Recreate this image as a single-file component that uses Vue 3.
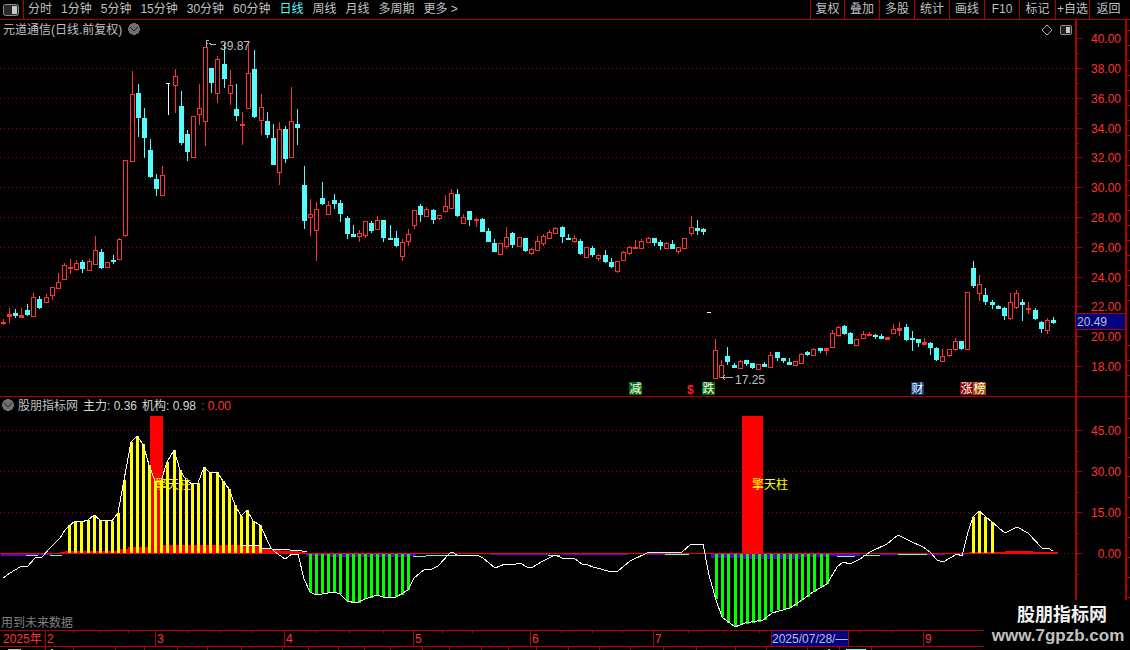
<script setup>
const leftMenu = [
  { t: '分时' }, { t: '1分钟' }, { t: '5分钟' }, { t: '15分钟' }, { t: '30分钟' }, { t: '60分钟' },
  { t: '日线', on: true }, { t: '周线' }, { t: '月线' }, { t: '多周期' }, { t: '更多 >' }
]
const rightMenu = ['复权', '叠加', '多股', '统计', '画线', 'F10', '标记', '+自选', '返回']

const raw = [
[3,'r',319,322,323,325],[9,'r',308,314,316,323],[15,'c',309,313,315,318],[21,'r',308,315,317,317],[27,'c',304,310,315,316],
[33,'r',293,297,316,317],[39,'c',296,299,308,309],[46,'r',294,297,302,303],[52,'r',287,287,295,300],[58,'r',273,282,288,288],
[64,'r',263,265,279,280],[70,'r',259,267,268,274],[76,'r',260,263,269,271],[82,'c',260,262,269,273],[89,'r',259,261,270,270],
[95,'r',236,250,264,264],[101,'c',249,252,268,269],[107,'r',262,262,267,267],[113,'c',255,260,261,264],[119,'r',238,239,259,259],
[125,'r',160,160,235,237],[132,'r',71,94,161,161],[138,'c',84,93,118,137],[144,'c',108,118,138,158],[150,'c',139,150,177,178],
[156,'c',174,179,189,196],[162,'r',166,175,195,195],[175,'r',69,76,85,113],[181,'c',91,106,143,145],[187,'c',130,134,152,161],
[193,'r',116,116,157,157],[199,'r',84,108,114,125],[205,'r',47,47,121,146],[211,'c',68,68,83,93],[217,'r',56,59,93,103],
[224,'c',43,64,79,88],[230,'r',70,85,93,105],[236,'c',84,109,116,121],[242,'r',112,124,125,145],[248,'r',41,73,108,109],
[254,'c',50,69,117,118],[261,'r',94,107,120,135],[267,'c',112,121,135,138],[273,'c',124,138,165,165],[279,'r',122,129,172,185],
[285,'c',126,129,159,163],[291,'r',87,121,157,157],[297,'c',109,124,128,145],[304,'c',166,185,221,229],[310,'r',199,214,217,236],
[316,'r',202,209,230,261],[322,'c',182,198,204,205],[328,'r',201,205,214,215],[334,'c',194,200,204,209],[340,'c',200,203,214,222],
[347,'c',216,218,234,239],[353,'c',225,234,236,236],[359,'r',230,233,236,242],[365,'r',221,221,235,238],[371,'c',221,223,231,233],
[377,'r',216,220,229,229],[383,'c',220,220,238,242],[390,'c',225,238,239,240],[396,'c',231,238,246,247],[402,'r',239,242,256,261],
[408,'r',229,234,241,246],[414,'r',210,210,225,229],[420,'c',204,206,215,222],[426,'r',207,209,216,216],[433,'c',209,210,220,224],
[439,'r',215,215,218,220],[445,'r',195,206,211,213],[451,'r',189,193,208,208],[457,'c',189,194,216,217],[463,'r',214,217,223,223],
[469,'c',211,211,220,226],[476,'r',218,219,220,227],[482,'c',218,219,232,232],[488,'c',228,231,242,242],[494,'c',239,243,252,252],
[500,'r',243,243,254,254],[506,'r',227,237,246,249],[512,'c',232,233,245,248],[519,'r',237,237,246,247],[525,'c',238,238,251,252],
[531,'r',248,249,253,255],[537,'r',236,241,250,250],[543,'r',234,236,243,246],[549,'r',230,232,238,238],[555,'r',227,228,233,233],
[562,'c',226,227,237,243],[568,'c',234,238,239,239],[574,'r',235,238,241,243],[580,'c',239,241,254,255],[586,'r',247,247,257,257],
[592,'c',246,248,255,257],[598,'r',254,255,258,261],[605,'c',250,255,262,263],[611,'c',258,262,267,268],[617,'r',261,261,271,273],
[623,'r',251,252,260,260],[629,'r',246,247,253,255],[635,'r',240,247,248,249],[641,'r',239,241,248,248],[648,'r',237,238,242,242],
[654,'c',238,238,243,246],[660,'c',240,242,246,250],[666,'r',242,243,248,248],[672,'c',240,244,249,249],[678,'r',247,247,251,254],
[684,'r',238,238,248,248],[691,'r',216,227,233,236],[697,'c',220,228,230,235],[703,'c',228,229,232,235],
[715,'r',339,350,378,378],[721,'r',360,365,377,377],[727,'c',347,356,362,365],[734,'c',363,365,367,367],[740,'r',360,361,368,368],
[746,'c',360,360,364,366],[752,'c',363,363,368,369],[758,'r',364,364,369,369],[764,'c',362,364,366,367],[770,'r',352,355,367,368],
[777,'c',352,352,358,361],[783,'c',358,358,361,363],[789,'c',358,362,364,365],[795,'r',361,361,365,365],[801,'r',353,354,363,364],
[807,'c',351,352,354,356],[813,'r',348,349,355,356],[820,'c',348,348,351,353],[826,'r',348,348,350,355],[832,'r',330,333,347,348],
[838,'r',326,327,335,337],[844,'c',325,326,334,335],[850,'c',332,333,344,344],[856,'r',339,339,345,345],[863,'r',331,334,338,338],
[869,'r',332,334,335,336],[875,'c',334,335,336,339],[881,'c',334,336,338,338],[887,'r',337,337,339,339],[893,'r',324,329,333,333],
[899,'r',322,328,330,336],[906,'c',324,327,340,341],[912,'c',331,338,339,351],[918,'c',339,339,343,347],[924,'r',338,342,344,344],
[930,'c',342,343,348,355],[936,'c',347,348,360,361],[942,'r',349,356,361,361],[949,'r',349,349,355,357],[955,'r',338,341,349,351],
[961,'c',341,341,349,350],[967,'r',292,292,349,349],[973,'c',261,268,286,288],[979,'r',275,284,293,301],[985,'c',288,295,302,305],
[992,'c',300,302,305,309],[998,'c',305,306,309,309],[1004,'c',307,308,316,320],[1010,'r',293,302,318,320],[1016,'r',290,293,307,309],
[1022,'c',299,302,305,321],[1028,'r',302,308,309,314],[1035,'c',308,310,319,320],[1041,'c',321,322,329,333],[1047,'r',318,320,330,334],
[1053,'c',317,320,323,324]
]
const candles = raw.map(([x, k, wt, t, b, wb], i) => ({
  id: i, x, wt, wb, t, b, red: k === 'r', flat: b - t <= 2, h: Math.max(b - t, 1)
}))

const priceLabels = [
  ['40.00', 38], ['38.00', 68], ['36.00', 98], ['34.00', 128], ['32.00', 157], ['30.00', 187],
  ['28.00', 217], ['26.00', 247], ['24.00', 277], ['22.00', 306], ['20.00', 336], ['18.00', 366]
]
const priceGrid = priceLabels.slice(1).map((p) => p[1])
const priceMinor = priceLabels.map((p) => p[1] + 15)
const outerTicks = [30, 45, 60, 75, 90, 105, 120, 135, 150, 165, 180, 195, 210, 225, 240, 255, 270, 285, 300, 345, 360, 375]

const tags = [
  { t: '减', x: 629, c: 'tg' }, { t: '跌', x: 702, c: 'tg' }, { t: '财', x: 911, c: 'tb' },
  { t: '涨', x: 960, c: 'tr' }, { t: '榜', x: 973, c: 'to' }
]

const subLabels = [['45.00', 430], ['30.00', 471], ['15.00', 512], ['0.00', 553]]
const subMinor = [451, 492, 533, 574]
const subOuter = [418, 437, 457, 476, 497, 517, 537, 557, 577, 597]

const yellow = [
  [69,525],[75,521],[81,522],[88,520],[94,515],[100,520],[106,521],[112,521],[118,513],[124,480],[131,442],[137,436],
  [143,444],[149,465],[155,481],[161,481],[167,462],[174,450],[180,470],[186,480],[192,484],[198,483],[204,467],[210,473],
  [217,472],[223,481],[229,489],[235,505],[241,516],[247,510],[253,521],[260,525],
  [973,517],[979,511],[985,517],[992,522]
].map(([x, y]) => ({ x, y, h: 553 - y }))

const green = [
  [310,592],[316,595],[322,593],[328,593],[334,592],[340,594],[347,601],[353,603],[359,603],[365,599],[371,598],[377,595],
  [383,597],[389,597],[396,597],[402,595],[408,590],
  [716,599],[722,617],[728,623],[735,626],[741,625],[747,624],[753,623],[759,622],[765,620],[771,612],[778,610],[784,609],
  [790,608],[796,606],[802,600],[808,597],[814,592],[821,587],[827,584]
].map(([x, y]) => ({ x, h: y - 553 }))

const purple = [
  [1,553,25,3],[26,553,26,2],[306,554,24,2],[330,554,80,3],[410,554,6,2],[490,554,60,1],[563,554,65,1],[647,554,18,1],
  [711,554,29,4],[740,554,60,5],[800,554,30,3],[830,554,30,2],[880,554,18,1],[925,554,20,1],[955,554,10,1]
].map(([x, y, w, h]) => ({ x, y, w, h }))
const mint = [
  [26,555,12],[50,555,12],[413,556,13],[426,555,18],[443,555,24],[548,555,12],[665,554,24],[680,554,9],
  [837,556,18],[863,555,17],[898,554,29]
].map(([x, y, w]) => ({ x, y, w }))

const linePts = [
  [3,578],[10,573],[20,567],[28,566],[35,558],[42,557],[50,548],[60,538],[65,530],[69,526],[75,521],[81,522],[88,520],[94,515],
  [100,520],[112,521],[118,513],[124,480],[131,442],[137,436],[143,444],[149,465],[155,481],[161,481],[167,462],[174,450],
  [180,470],[186,480],[192,484],[198,483],[204,467],[210,473],[217,472],[223,481],[229,489],[235,505],[241,516],[247,510],
  [253,521],[260,525],[271,548],[275,552],[285,559],[292,554],[298,554],[304,579],[310,592],[316,595],[328,593],[334,592],
  [340,594],[347,601],[356,603],[365,599],[377,595],[383,597],[396,597],[408,590],[414,578],[425,569],[432,569],[438,566],
  [450,553],[452,552],[457,555],[467,556],[477,555],[483,558],[495,568],[505,564],[512,565],[520,563],[527,567],[533,567],
  [543,561],[555,555],[562,558],[575,559],[582,564],[588,565],[593,567],[612,572],[618,571],[630,561],[647,553],[657,552],
  [682,552],[690,545],[703,544],[709,575],[716,600],[722,617],[735,627],[745,623],[763,620],[772,613],[790,608],[802,600],
  [813,592],[827,584],[837,567],[843,562],[850,564],[860,559],[870,552],[887,544],[898,535],[910,541],[923,547],[930,552],
  [937,560],[943,562],[950,558],[957,554],[962,556],[968,532],[973,517],[979,511],[992,522],[1005,533],[1017,527],[1028,533],
  [1042,548],[1048,548],[1053,551]
].map((p) => p.join(',')).join(' ')

const dateLabels = [['2025年', 3], ['2', 47], ['3', 157], ['4', 286], ['5', 415], ['6', 532], ['7', 655], ['9', 925]]
const dateDiv = [45, 155, 284, 413, 530, 653, 923]
const dateTicks = [73, 100, 128, 187, 220, 252, 316, 349, 383, 442, 472, 561, 592, 622, 688, 724, 759, 859, 891]
const lowTicks = [45, 73, 115, 144, 177, 207, 241, 282, 308, 338, 364, 390, 422, 449, 481, 508, 536, 568, 599, 630, 663, 696, 735, 766, 807, 839, 871]
</script>

<template>
  <div class="page">
    <header class="topbar">
      <div class="corner">
        <svg width="16" height="12" viewBox="0 0 16 12">
          <rect x="0.5" y="0.5" width="15" height="11" rx="2" fill="#2a2a2a" stroke="#8c8c8c" />
          <rect x="9" y="2" width="5" height="8" fill="#c8c8c8" />
        </svg>
      </div>
      <nav class="menu">
        <span v-for="m in leftMenu" :key="m.t" class="mi" :class="{ on: m.on }">{{ m.t }}</span>
      </nav>
      <nav class="tools">
        <span v-for="m in rightMenu" :key="m" class="tool">{{ m }}</span>
      </nav>
    </header>

    <svg class="panel main" width="1130" height="376" viewBox="0 20 1130 376">
      <defs>
        <pattern id="dotsA" width="4" height="1" patternUnits="userSpaceOnUse">
          <rect width="1" height="1" fill="#9a0000" />
        </pattern>
      </defs>
      <rect v-for="y in priceGrid" :key="y" x="0" :y="y" width="1075" height="1" fill="url(#dotsA)" />
      <g v-for="c in candles" :key="c.id">
        <rect :x="c.x" :y="c.wt" width="1" :height="c.wb - c.wt" :fill="c.red ? '#ff3232' : '#54fcfc'" />
        <template v-if="c.flat">
          <rect :x="c.x - 2" :y="c.t" width="5" :height="c.h + 1" :fill="c.red ? '#ff3232' : '#54fcfc'" />
        </template>
        <rect v-else-if="c.red" :x="c.x - 1.5" :y="c.t + 0.5" width="4" :height="c.h" fill="#000" stroke="#ff3232" />
        <rect v-else :x="c.x - 2" :y="c.t" width="5" :height="c.h" fill="#54fcfc" />
      </g>
      <rect x="168" y="83" width="1" height="32" fill="#fff" />
      <rect x="166" y="83" width="4" height="1" fill="#fff" />
      <rect x="707" y="312" width="4" height="1" fill="#fff" />

      <path class="mark" d="M206 47V40H209M206 43H208M209 43L212 45L216 44" />
      <text class="txt" x="220" y="50">39.87</text>
      <path class="mark" d="M733 377.5H722L725 375.5M722 377.5L725 379.5" />
      <text class="txt" x="735" y="384">17.25</text>

      <text class="txt" x="3" y="34">元道通信(日线.前复权)</text>
      <circle cx="134" cy="29" r="6" fill="#6e6e6e" />
      <path class="chev" d="M130.5 27.5L134 31L137.5 27.5" />
      <path class="mark" d="M1047 25L1052 30L1047 35L1042 30Z" />
      <rect x="1060.5" y="25.5" width="11" height="9" rx="2" fill="#222" stroke="#8c8c8c" />
      <rect x="1066" y="27" width="4" height="6" fill="#c8c8c8" />

      <g v-for="t in tags" :key="t.t">
        <rect :class="t.c" :x="t.x" y="382" width="13" height="13" />
        <text class="tag" :x="t.x + 0.5" y="393">{{ t.t }}</text>
      </g>
      <text class="dollar" x="687" y="394">$</text>

      <rect class="axis" x="1075" y="20" width="2" height="376" />
      <rect class="axis" x="1125" y="20" width="2" height="376" />
      <rect v-for="p in priceLabels" :key="p[1]" class="axis" x="1077" :y="p[1]" width="5" height="1" />
      <rect v-for="y in priceMinor" :key="y" class="axis" x="1077" :y="y" width="2" height="1" />
      <rect v-for="y in outerTicks" :key="y" class="axis" x="1127" :y="y" width="3" height="1" />
      <text v-for="p in priceLabels" :key="p[0]" class="num" x="1121" :y="p[1] + 5">{{ p[0] }}</text>
      <rect x="1075.5" y="313.5" width="50" height="16" fill="#000080" stroke="#b00000" />
      <text class="txt" x="1077" y="326">20.49</text>
    </svg>

    <svg class="panel sub" width="1130" height="234" viewBox="0 396 1130 234">
      <defs>
        <pattern id="dotsB" width="4" height="1" patternUnits="userSpaceOnUse">
          <rect width="1" height="1" fill="#9a0000" />
        </pattern>
      </defs>
      <rect class="axis" x="0" y="396" width="1130" height="1" />
      <rect v-for="s in subLabels.slice(0, 3)" :key="s[1]" x="0" :y="s[1]" width="1075" height="1" fill="url(#dotsB)" />
      <rect x="1058" y="553" width="17" height="1" fill="url(#dotsB)" />
      <rect x="150" y="416" width="13" height="137" fill="#f00" />
      <rect x="742" y="416" width="21" height="137" fill="#f00" />
      <polygon fill="#f00" points="60,553 60,552 70,551 120,551 120,549 128,549 128,547 163,547 163,545 258,545 262,548 272,550 290,551 305,552 305,553" />
      <polygon fill="#f00" points="969,553 969,552 1005,552 1005,551 1033,551 1033,552 1058,552 1058,553" />
      <rect v-for="b in purple" :key="b.x" :x="b.x" :y="b.y" :width="b.w" :height="b.h" fill="#6000c8" />
      <rect v-for="m in mint" :key="m.x" :x="m.x" :y="m.y" :width="m.w" height="1" fill="#66ffcc" />
      <rect v-for="(b, i) in yellow" :key="i" :x="b.x - 1" :y="b.y" width="3" :height="b.h" fill="#ff0" />
      <rect v-for="(b, i) in green" :key="i" :x="b.x - 1" y="553" width="3" :height="b.h" fill="#0f0" />
      <rect x="0" y="553" width="1058" height="1" fill="#f00" />
      <polyline class="wave" :points="linePts" />
      <polyline class="wave" points="240,545 258,545 262,548 272,549 290,550 302,551 307,552" />
      <text class="yl" x="155" y="489">擎天柱</text>
      <text class="yl" x="752" y="489">擎天柱</text>

      <circle cx="8" cy="405" r="6" fill="#6e6e6e" />
      <path class="chev" d="M4.5 403.5L8 407L11.5 403.5" />
      <text class="txt" x="18" y="410">股朋指标网</text>
      <text class="txt lt" x="83" y="410">主力: 0.36</text>
      <text class="txt lt" x="142" y="410">机构: 0.98</text>
      <text class="red" x="201" y="410">: 0.00</text>
      <text class="future" x="1" y="627">用到未来数据</text>

      <rect class="axis" x="1075" y="396" width="2" height="234" />
      <rect class="axis" x="1125" y="396" width="2" height="234" />
      <rect v-for="s in subLabels" :key="s[1]" class="axis" x="1077" :y="s[1]" width="5" height="1" />
      <rect v-for="y in subMinor" :key="y" class="axis" x="1077" :y="y" width="2" height="1" />
      <rect v-for="y in subOuter" :key="y" class="axis" x="1127" :y="y" width="3" height="1" />
      <text v-for="s in subLabels" :key="s[0]" class="num" x="1121" :y="s[1] + 5">{{ s[0] }}</text>
    </svg>

    <svg class="panel date" width="1130" height="20" viewBox="0 630 1130 20">
      <rect class="axis" x="0" y="630" width="1130" height="1" />
      <rect class="axis" x="0" y="646" width="1130" height="1" />
      <rect v-for="x in dateDiv" :key="x" class="axis" :x="x" y="630" width="1" height="16" />
      <rect v-for="x in dateTicks" :key="x" class="axis" :x="x" y="631" width="1" height="2" />
      <rect v-for="x in lowTicks" :key="x" class="axis" :x="x" y="647" width="1" height="3" />
      <rect x="771.5" y="630.5" width="77" height="16" fill="#000080" stroke="#b00000" />
      <text v-for="d in dateLabels" :key="d[0]" class="red" :x="d[1]" y="643">{{ d[0] }}</text>
      <text class="txt" x="772" y="643">2025/07/28/—</text>
      <rect x="8" y="649" width="13" height="1" fill="#c0c0c0" />
      <rect x="51" y="649" width="2" height="1" fill="#c0c0c0" />
      <rect x="828" y="649" width="2" height="1" fill="#c0c0c0" />
      <rect x="846" y="649" width="20" height="1" fill="#54fcfc" />
    </svg>

    <aside class="stamp">
      <strong class="s1">股朋指标网</strong>
      <span class="s2">www.7gpzb.com</span>
    </aside>
  </div>
</template>

<style scoped>
.page {
  position: relative;
  width: 1130px;
  height: 650px;
  overflow: hidden;
  background: #000;
  display: flex;
  flex-direction: column;
  font-family: "Liberation Sans", "Noto Sans CJK SC", sans-serif;
  font-size: 12px;
  color: #c0c0c0;
}
.topbar {
  flex: 0 0 20px;
  box-sizing: border-box;
  display: flex;
  align-items: stretch;
  border-bottom: 1px solid #b00000;
  line-height: 19px;
}
.corner {
  flex: 0 0 24px;
  box-sizing: border-box;
  display: flex;
  align-items: center;
  justify-content: center;
  padding-right: 1px;
  border-right: 1px solid #b00000;
}
.menu {
  display: flex;
  gap: 9px;
  padding-left: 4px;
}
.mi {
  white-space: pre;
}
.on {
  color: #54fcfc;
}
.tools {
  margin-left: auto;
  display: flex;
  margin-right: 3px;
}
.tool {
  flex: 0 0 35px;
  box-sizing: border-box;
  border-left: 1px solid #b00000;
  text-align: center;
  white-space: nowrap;
}
.tool:nth-child(1),
.tool:nth-child(8) {
  flex-basis: 34px;
}
.tool:nth-child(7) {
  flex-basis: 36px;
}
.tool:last-child {
  flex-basis: 38px;
}
.panel {
  display: block;
  flex: none;
  shape-rendering: crispEdges;
}
.axis {
  fill: #b00000;
}
.mark {
  fill: none;
  stroke: #b0b0b0;
  stroke-width: 1;
}
.chev {
  fill: none;
  stroke: #262626;
  stroke-width: 1.4;
}
.wave {
  fill: none;
  stroke: #fff;
  stroke-width: 1;
}
text {
  font-family: "Liberation Sans", "Noto Sans CJK SC", sans-serif;
  font-size: 12px;
  shape-rendering: auto;
}
.txt {
  fill: #c0c0c0;
}
.lt {
  fill: #d8d8d8;
}
.red {
  fill: #ff3232;
}
.num {
  fill: #ff3232;
  text-anchor: end;
}
.future {
  fill: #808080;
}
.yl {
  fill: #ff0;
}
.tag {
  fill: #fff;
}
.dollar {
  fill: #ff1e1e;
  font-weight: 700;
}
.tg {
  fill: #006e00;
}
.tb {
  fill: #0a3c78;
}
.tr {
  fill: #8c0000;
}
.to {
  fill: #a05000;
}
.stamp {
  position: absolute;
  left: 984px;
  top: 600px;
  width: 146px;
  height: 50px;
  background: #000;
  display: flex;
  flex-direction: column;
  align-items: center;
}
.s1 {
  color: #f2f2f2;
  font-family: "Noto Sans CJK SC", sans-serif;
  font-size: 18px;
  line-height: 26px;
  font-weight: 700;
  padding-left: 10px;
}
.s2 {
  color: #c0c0c0;
  font-size: 17px;
  line-height: 20px;
  font-weight: 700;
  padding-left: 2px;
}
</style>
